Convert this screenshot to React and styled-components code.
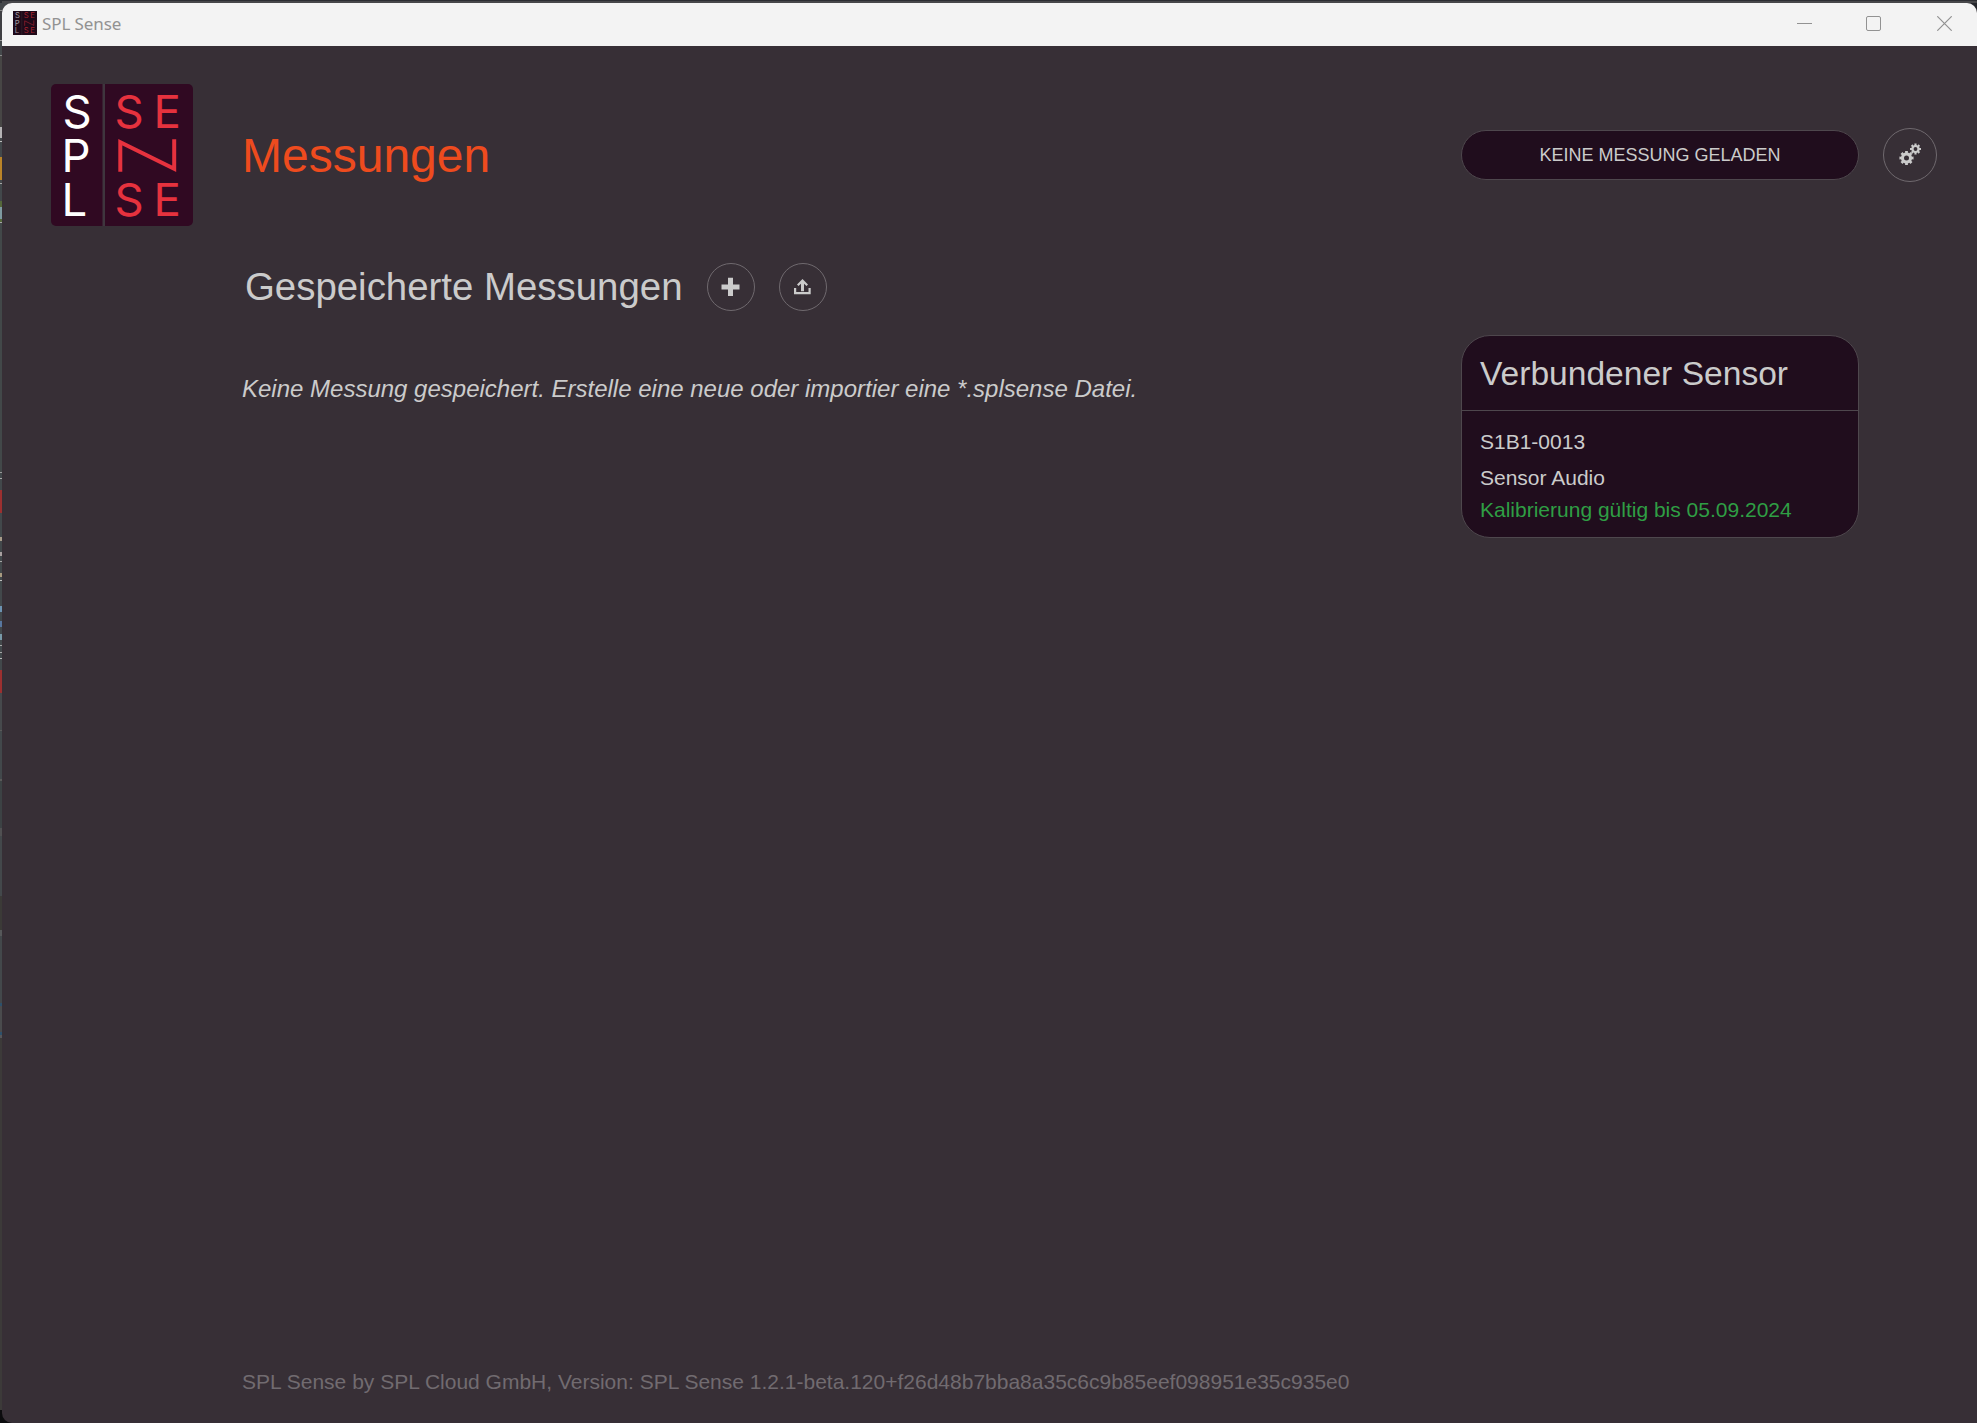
import React from "react";
import styled, { createGlobalStyle } from "styled-components";

const c = {
  bg: "#372f36",
  panel: "#200d1d",
  panelLine: "#4e474d",
  ring: "#6f696e",
  text: "#cbcbcb",
  accent: "#ee4b1e",
  ok: "#2f9e44",
  muted: "#716b70",
  brand: "#300922",
  brandRed: "#e6323e",
};

const GlobalStyle = createGlobalStyle`
  * { box-sizing: border-box; }
  html, body { margin: 0; padding: 0; background: #3c3a39; }
  body {
    font-family: "Liberation Sans", Arial, sans-serif;
    color: ${c.text};
    overflow: hidden;
  }
`;

/* Sliver of the desktop that shows beside the window: [from, to, colour] */
const slivers = [
  [0, 3, "#2c2e33"],
  [3, 10, "#44474a"],
  [10, 11, "#8a8a8a"],
  [11, 40, "#3f3f42"],
  [40, 41, "#a0a0a0"],
  [41, 55, "#44484b"],
  [55, 56, "#8a8a8a"],
  [56, 127, "#474645"],
  [127, 138, "#b5b3b5"],
  [138, 141, "#44484b"],
  [141, 142, "#c0c0c0"],
  [142, 157, "#42484b"],
  [157, 180, "#ba8428"],
  [180, 183, "#44484b"],
  [183, 184, "#a8a8a8"],
  [184, 201, "#42484b"],
  [201, 207, "#55683a"],
  [207, 219, "#7e9aa0"],
  [219, 222, "#55683a"],
  [222, 223, "#a8a8a8"],
  [223, 472, "#424849"],
  [472, 473, "#9a9a9a"],
  [473, 478, "#42484b"],
  [478, 479, "#a8a8a8"],
  [479, 490, "#42484b"],
  [490, 513, "#9c3030"],
  [513, 537, "#42484b"],
  [537, 541, "#a89c8a"],
  [541, 552, "#42484b"],
  [552, 556, "#a8a0a0"],
  [556, 561, "#42484b"],
  [561, 562, "#a8a8a8"],
  [562, 573, "#42484b"],
  [573, 577, "#a89a80"],
  [577, 580, "#42484b"],
  [580, 581, "#c0c0c0"],
  [581, 606, "#42484b"],
  [606, 612, "#6d93b2"],
  [612, 621, "#42484b"],
  [621, 627, "#5877a0"],
  [627, 634, "#42484b"],
  [634, 640, "#7899a8"],
  [640, 645, "#42484b"],
  [645, 646, "#a8a8a8"],
  [646, 652, "#42484b"],
  [652, 653, "#a8a8a8"],
  [653, 658, "#42484b"],
  [658, 659, "#b8b8b8"],
  [659, 670, "#42484b"],
  [670, 693, "#9c3030"],
  [693, 730, "#46494c"],
  [730, 731, "#5a5a5a"],
  [731, 779, "#42484b"],
  [779, 781, "#5a5a5a"],
  [781, 828, "#3c4244"],
  [828, 836, "#505052"],
  [836, 896, "#43484b"],
  [896, 930, "#3b3a37"],
  [930, 936, "#56585a"],
  [936, 1003, "#43484b"],
  [1003, 1006, "#2d506b"],
  [1006, 1032, "#4a4b4d"],
  [1032, 1035, "#2d506b"],
  [1035, 1038, "#55565a"],
  [1038, 1410, "#3c3a39"],
  [1410, 1423, "#0c0c0e"],
];
const sliverStops = slivers
  .map(([from, to, colour]) => `${colour} ${from}px ${to}px`)
  .join(", ");

const Desktop = styled.div`
  width: 1977px;
  height: 1423px;
  padding: 3px 0 0 2px;
  background:
    linear-gradient(#2c2d32 0 1px, #47474a 1px 3px) 2px 0 / 100% 3px no-repeat,
    linear-gradient(${sliverStops}) 0 0 / 12px 100% no-repeat,
    #25272c;
`;

const Window = styled.div`
  display: flex;
  flex-direction: column;
  height: 100%;
  border-radius: 10px 10px 0 10px;
  overflow: hidden;
  background: ${c.bg};
`;

const TitleBar = styled.div`
  display: flex;
  align-items: center;
  flex: none;
  height: 43px;
  padding: 0 25px 3px 11px;
  background: #f3f3f3;
  color: #929292;
`;

const WindowTitle = styled.span`
  flex: 1;
  margin: 2px 0 0 5px;
  font: 400 17px/24px "Noto Sans", "Open Sans", sans-serif;
  letter-spacing: -0.1px;
`;

const WindowControls = styled.div`
  display: flex;
  align-items: center;
  gap: 54px;
  svg { display: block; }
  svg:last-child { margin-left: 2px; }
`;

const Body = styled.div`
  flex: 1;
  display: grid;
  grid-template-columns: 191px 1fr 422px 54px;
  grid-template-rows: 142px 1fr auto;
  padding: 38px 40px 0 49px;
`;

const PageTitle = styled.h1`
  margin: 2px 0 0;
  align-self: center;
  font-size: 48px;
  line-height: 56px;
  font-weight: 400;
  color: ${c.accent};
`;

const StatusPill = styled.div`
  align-self: center;
  display: flex;
  align-items: center;
  justify-content: center;
  width: 398px;
  height: 50px;
  border: 1px solid ${c.panelLine};
  border-radius: 25px;
  background: ${c.panel};
  font-size: 18px;
  line-height: 22px;
`;

const RoundButton = styled.button`
  display: flex;
  align-items: center;
  justify-content: center;
  align-self: center;
  flex: none;
  width: ${(p) => p.$size}px;
  height: ${(p) => p.$size}px;
  padding: 0;
  border: 1px solid ${c.ring};
  border-radius: 50%;
  background: transparent;
  color: ${c.text};
  svg { display: block; }
`;

const Main = styled.main`
  grid-column: 2;
  padding-top: 37px;
`;

const SectionHead = styled.div`
  display: flex;
  align-items: center;
  gap: 24px;
  height: 48px;
  padding-left: 3px;
`;

const SectionTitle = styled.h2`
  margin: 0;
  width: 438px;
  font-size: 38.4px;
  line-height: 48px;
  font-weight: 400;
  white-space: nowrap;
`;

const EmptyNote = styled.p`
  margin: 64px 0 0;
  font-size: 24px;
  line-height: 28px;
  font-style: italic;
`;

const Sidebar = styled.aside`
  padding-top: 109px;
`;

const Card = styled.section`
  width: 398px;
  height: 203px;
  border: 1px solid ${c.panelLine};
  border-radius: 29px;
  background: ${c.panel};
`;

const CardTitle = styled.h3`
  margin: 0;
  height: 75px;
  padding-left: 18px;
  border-bottom: 1px solid ${c.panelLine};
  font-size: 33.6px;
  line-height: 75px;
  font-weight: 400;
`;

const CardBody = styled.div`
  padding: 13px 18px 0;
  font-size: 21px;
`;

const CardLine = styled.div`
  line-height: ${(p) => p.$height || 36}px;
  color: ${(p) => (p.$ok ? c.ok : c.text)};
`;

const Footer = styled.footer`
  grid-column: 2 / -1;
  padding-bottom: 27px;
  font-size: 21px;
  line-height: 28px;
  color: ${c.muted};
`;

const LogoSvg = styled.svg`
  display: block;
  flex: none;
  font-family: Inter, Lato, sans-serif;
  font-size: 45.5px;
`;

function Logo({ size, radius = 5, bg = c.brand, ink = "#fff", red = c.brandRed }) {
  return (
    <LogoSvg width={size} height={size} viewBox="0 0 142 142">
      <rect width="142" height="142" rx={radius} fill={bg} />
      <rect x="51.500" width="2.500" height="142" fill="#3f363e" />
      <g fill={ink}>
        <text x="11.500" y="44">S</text>
        <text x="10.500" y="88">P</text>
        <text x="10.500" y="132">L</text>
      </g>
      <g fill={red}>
        <text x="63.500" y="44">S</text>
        <text x="102.500" y="44">E</text>
        <text x="63.500" y="132">S</text>
        <text x="102.500" y="132">E</text>
      </g>
      <path
        d="M69.300 87.700V58.200L123.200 84.800V55.300"
        fill="none"
        stroke={red}
        strokeWidth="4"
      />
    </LogoSvg>
  );
}

function gearPath(cx, cy, root, tip, hole) {
  const teeth = 8;
  const pts = [];
  for (let i = 0; i < teeth; i++) {
    const a = (i * 2 * Math.PI) / teeth;
    [[-0.24, root], [-0.2, tip], [0.2, tip], [0.24, root]].forEach(([d, r]) => {
      pts.push(`${(cx + r * Math.cos(a + d)).toFixed(2)} ${(cy + r * Math.sin(a + d)).toFixed(2)}`);
    });
  }
  return `M${pts.join("L")}ZM${cx - hole} ${cy}a${hole} ${hole} 0 1 0 ${2 * hole} 0a${hole} ${hole} 0 1 0 ${-2 * hole} 0Z`;
}

const GearsIcon = () => (
  <svg width="24" height="24" viewBox="0 0 24 24" fill="currentColor" fillRule="evenodd">
    <path d={gearPath(8.5, 15, 5.6, 7.2, 2.5)} />
    <path d={gearPath(17.5, 6, 4.2, 5.6, 1.9)} />
  </svg>
);

const PlusIcon = () => (
  <svg width="24" height="24" viewBox="0 0 24 24" fill="currentColor">
    <path d="M9 2.800h5v6.600h6.500v5h-6.500v6.600h-5v-6.600h-6.500v-5h6.500z" />
  </svg>
);

const UploadIcon = () => (
  <svg width="24" height="24" viewBox="0 0 24 24" fill="currentColor">
    <path d="M11.500 4l5.500 5.500-1.500 1.500-2.500-2.300v7.600h-3v-7.600l-2.500 2.300-1.500-1.500z" />
    <path d="M3 13h2.200v4h12.300v-4h2.200v6.200h-16.700z" />
  </svg>
);

export default function App() {
  return (
    <>
      <GlobalStyle />
      <Desktop>
        <Window>
          <TitleBar>
            <Logo size={24} radius={0} bg="#1f0a19" ink="#a39aa1" red="#a5222f" />
            <WindowTitle>SPL Sense</WindowTitle>
            <WindowControls>
              <svg width="15" height="15" stroke="currentColor"><path d="M0 7.500h15" /></svg>
              <svg width="15" height="15" fill="none" stroke="currentColor">
                <rect x=".5" y=".5" width="14" height="14" rx="1.500" />
              </svg>
              <svg width="15" height="15" stroke="currentColor" strokeWidth="1.200">
                <path d="M.3 .3l14.400 14.400M14.700 .3l-14.400 14.400" />
              </svg>
            </WindowControls>
          </TitleBar>
          <Body>
            <Logo size={142} />
            <PageTitle>Messungen</PageTitle>
            <StatusPill>KEINE MESSUNG GELADEN</StatusPill>
            <RoundButton $size={54} aria-label="Einstellungen"><GearsIcon /></RoundButton>
            <Main>
              <SectionHead>
                <SectionTitle>Gespeicherte Messungen</SectionTitle>
                <RoundButton $size={48} aria-label="Neu"><PlusIcon /></RoundButton>
                <RoundButton $size={48} aria-label="Importieren"><UploadIcon /></RoundButton>
              </SectionHead>
              <EmptyNote>
                Keine Messung gespeichert. Erstelle eine neue oder importier eine *.splsense Datei.
              </EmptyNote>
            </Main>
            <Sidebar>
              <Card>
                <CardTitle>Verbundener Sensor</CardTitle>
                <CardBody>
                  <CardLine>S1B1-0013</CardLine>
                  <CardLine>Sensor Audio</CardLine>
                  <CardLine $ok $height={28}>Kalibrierung gültig bis 05.09.2024</CardLine>
                </CardBody>
              </Card>
            </Sidebar>
            <Footer>
              SPL Sense by SPL Cloud GmbH, Version: SPL Sense 1.2.1-beta.120+f26d48b7bba8a35c6c9b85eef098951e35c935e0
            </Footer>
          </Body>
        </Window>
      </Desktop>
    </>
  );
}
